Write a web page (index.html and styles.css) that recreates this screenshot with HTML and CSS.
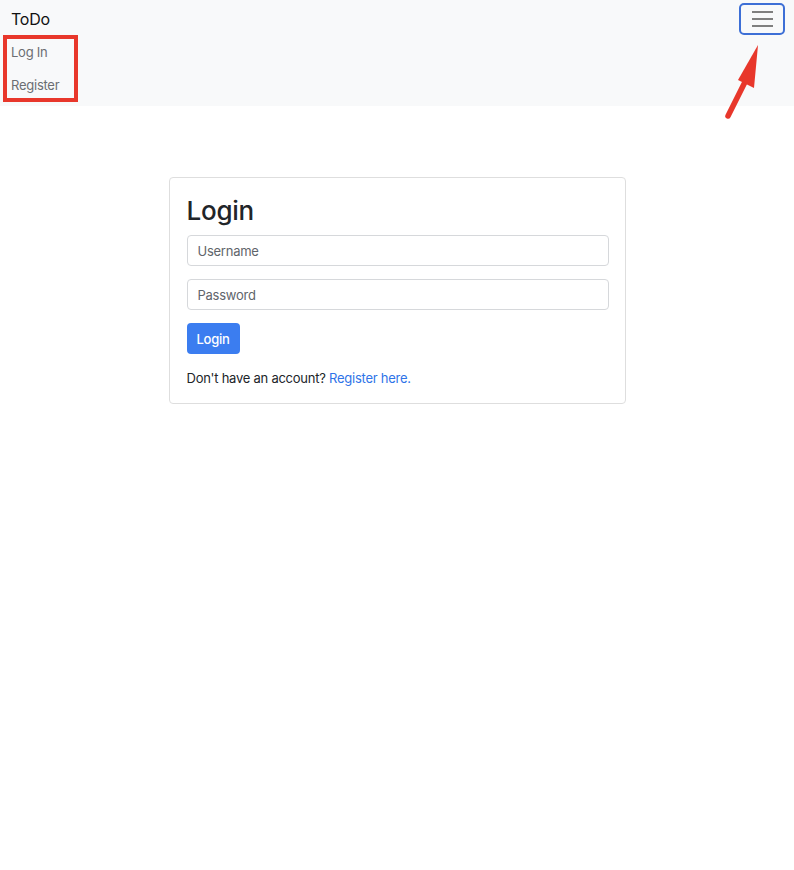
FILE: index.html
```html
<!DOCTYPE html>
<html>
<head>
<meta charset="utf-8">
<link rel="stylesheet" href="styles.css">
</head>
<body>
<nav class="navbar">
  <div class="nav-top">
    <span class="brand">ToDo</span>
    <button class="toggler" aria-label="menu">
      <span class="bar"></span><span class="bar"></span><span class="bar"></span>
    </button>
  </div>
  <ul class="nav-links">
    <li><a href="#">Log In</a></li>
    <li><a href="#">Register</a></li>
  </ul>
  <div class="annot-box"></div>
  <svg class="annot-arrow" width="50" height="90" viewBox="0 0 50 90">
    <line x1="8" y1="76" x2="27" y2="38" stroke="#e8372b" stroke-width="5.5" stroke-linecap="round"/>
    <polygon points="38,5 18,40 34,48" fill="#e8372b"/>
  </svg>
</nav>
<main class="main">
  <div class="card">
    <h1 class="title">Login</h1>
    <input class="field" type="text" placeholder="Username">
    <input class="field" type="password" placeholder="Password">
    <button class="btn">Login</button>
    <p class="note">Don't have an account? <a href="#">Register here.</a></p>
  </div>
</main>
</body>
</html>
```
FILE: styles.css
```css
* { box-sizing: border-box; }
body {
  margin: 0;
  font-family: Inter, "Liberation Sans", sans-serif;
  color: #212529;
  background: #fff;
  letter-spacing: -0.25px;
}
.navbar {
  position: relative;
  background: #f8f9fa;
  height: 106px;
  padding: 3px 9px 0 11px;
}
.nav-top {
  display: flex;
  justify-content: space-between;
  align-items: center;
  height: 32px;
}
.brand {
  font-size: 16px;
  color: #111;
}
.toggler {
  width: 46px;
  height: 32px;
  border: 2px solid #3d6fd6;
  border-radius: 5px;
  background: transparent;
  padding: 0;
  display: flex;
  flex-direction: column;
  align-items: center;
  justify-content: center;
  gap: 5px;
}
.bar {
  display: block;
  width: 21px;
  height: 2px;
  background: #7f7f7f;
}
.nav-links {
  list-style: none;
  margin: 0;
  padding: 0;
}
.nav-links li { height: 33px; display: flex; align-items: center; }
.nav-links a {
  color: #6b6e72;
  text-decoration: none;
  font-size: 13px;
}
.annot-box {
  position: absolute;
  left: 3px;
  top: 35px;
  width: 75px;
  height: 67px;
  border: 4px solid #e8372b;
}
.annot-arrow {
  position: absolute;
  left: 720px;
  top: 40px;
}
.main {
  display: flex;
  justify-content: center;
  padding-top: 71px;
}
.card {
  width: 457px;
  border: 1px solid #dedede;
  border-radius: 4px;
  padding: 18px 16px 8px 17px;
  display: flex;
  flex-direction: column;
}
.title {
  margin: 0 0 9px 0;
  font-size: 26px;
  font-weight: 500;
  line-height: 30px;
  color: #212529;
}
.field {
  height: 31px;
  border: 1px solid #d6d8db;
  border-radius: 4px;
  padding: 0 10px;
  font-family: inherit;
  letter-spacing: inherit;
  font-size: 13px;
  margin-bottom: 13px;
  color: #212529;
}
.field::placeholder { color: #5f656b; }
.btn {
  align-self: flex-start;
  height: 31px;
  padding: 0 10px;
  background: #3b7df0;
  color: #fff;
  border: none;
  border-radius: 4px;
  font-family: inherit;
  letter-spacing: inherit;
  font-size: 13px;
  font-weight: 500;
}
.note {
  margin: 16px 0 9px 0;
  font-size: 13px;
}
.note a { color: #2f74e8; text-decoration: none; }
```
